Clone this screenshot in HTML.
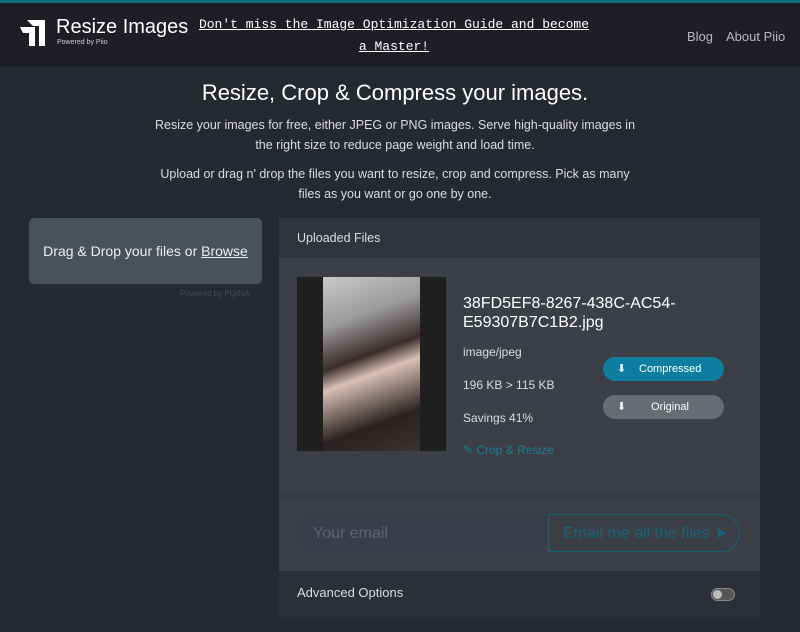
<!DOCTYPE html><html><head><style>
body{margin:0;width:800px;height:632px;overflow:hidden;background:#262930;font-family:"Liberation Sans",sans-serif;color:#fff}
.hd{position:absolute;top:0;left:0;width:800px;height:67px;background:#1d1f24;border-top:3px solid #0e6f80;box-sizing:border-box}
.t{position:absolute}
</style></head><body>
<div class="hd">
<svg class="t" style="left:19px;top:15px" width="28" height="30" viewBox="0 0 28 30"><path d="M8 2h18v26h-6V8H14z" fill="#fff"/><path d="M1 9h15v19h-6V15H4z" fill="#fff"/></svg>
<div class="t" style="left:56px;top:13px;font-size:20px">Resize Images</div>
<div class="t" style="left:57px;top:36px;font-size:7px;color:#ccc">Powered by Piio</div>
<div class="t" style="left:198px;top:11px;width:392px;text-align:center;font-family:'Liberation Mono',monospace;font-size:13px;line-height:22px;text-decoration:underline">Don't miss the Image Optimization Guide and become a Master!</div>
<div class="t" style="left:687px;top:26px;font-size:13px;color:#bbb">Blog</div>
<div class="t" style="left:726px;top:26px;font-size:13px;color:#bbb">About Piio</div>
</div>
<div class="t" style="left:0;top:80px;width:790px;text-align:center;font-size:22px">Resize, Crop &amp; Compress your images.</div>
<div class="t" style="left:145px;top:115px;width:500px;text-align:center;font-size:12.5px;line-height:20px;color:#ddd">Resize your images for free, either JPEG or PNG images. Serve high-quality images in the right size to reduce page weight and load time.</div>
<div class="t" style="left:150px;top:164px;width:490px;text-align:center;font-size:12.5px;line-height:20px;color:#ddd">Upload or drag n' drop the files you want to resize, crop and compress. Pick as many files as you want or go one by one.</div>
<div class="t" style="left:29px;top:218px;width:233px;height:66px;background:#4a5259;border-radius:5px;font-size:14px;line-height:66px;text-align:center;color:#eee">Drag &amp; Drop your files or <u>Browse</u></div>
<div class="t" style="left:180px;top:289px;font-size:8px;color:#444a52">Powered by PQINA</div>
<div class="t" style="left:279px;top:218px;width:481px;height:40px;background:#31343b"></div>
<div class="t" style="left:297px;top:231px;font-size:12.5px;color:#ddd">Uploaded Files</div>
<div class="t" style="left:279px;top:258px;width:481px;height:313px;background:#3c3f46"></div>
<div class="t" style="left:279px;top:495px;width:481px;height:2px;background:#363940"></div>
<div class="t" style="left:297px;top:277px;width:149px;height:174px;background:#1f1f20"></div>
<div class="t" style="left:323px;top:277px;width:97px;height:174px;background:linear-gradient(160deg,#c9c9c9 0%,#9a9a9a 25%,#3a2c2c 45%,#d8c0b4 55%,#2a2222 80%,#3a3330 100%)"></div>
<div class="t" style="left:463px;top:294px;font-size:16px;line-height:19px;color:#fff">38FD5EF8-8267-438C-AC54-<br>E59307B7C1B2.jpg</div>
<div class="t" style="left:463px;top:345px;font-size:12px;color:#ddd">image/jpeg</div>
<div class="t" style="left:463px;top:378px;font-size:12px;color:#ddd">196 KB &gt; 115 KB</div>
<div class="t" style="left:463px;top:411px;font-size:12px;color:#ddd">Savings 41%</div>
<div class="t" style="left:463px;top:443px;font-size:12px;color:#1a7d96">✎ Crop &amp; Resize</div>
<div class="t" style="left:603px;top:357px;width:121px;height:24px;border-radius:12px;background:#0e7ea0;font-size:11px;line-height:24px;color:#fff"><span style="position:absolute;left:14px">⬇</span><span style="position:absolute;left:36px">Compressed</span></div>
<div class="t" style="left:603px;top:395px;width:121px;height:24px;border-radius:12px;background:#666c72;font-size:11px;line-height:24px;color:#fff"><span style="position:absolute;left:14px">⬇</span><span style="position:absolute;left:48px">Original</span></div>
<div class="t" style="left:299px;top:515px;width:250px;height:38px;background:#393e4a;border-radius:19px 0 0 19px;font-size:16px;line-height:38px;color:#5d6470;padding-left:14px;box-sizing:border-box">Your email</div>
<div class="t" style="left:548px;top:514px;width:192px;height:38px;border:1px solid #17647a;border-radius:0 20px 20px 0;font-size:16px;line-height:38px;color:#17647a;padding-left:14px;box-sizing:border-box">Email me all the files ➤</div>
<div class="t" style="left:279px;top:571px;width:481px;height:46px;background:#2c2f36"></div>
<div class="t" style="left:297px;top:585px;font-size:13px;color:#ddd">Advanced Options</div>
<div class="t" style="left:711px;top:588px;width:22px;height:11px;border:1px solid #888;border-radius:7px;background:#555"><div style="width:9px;height:9px;border-radius:50%;background:#bbb;margin:1px"></div></div>
</body></html>
